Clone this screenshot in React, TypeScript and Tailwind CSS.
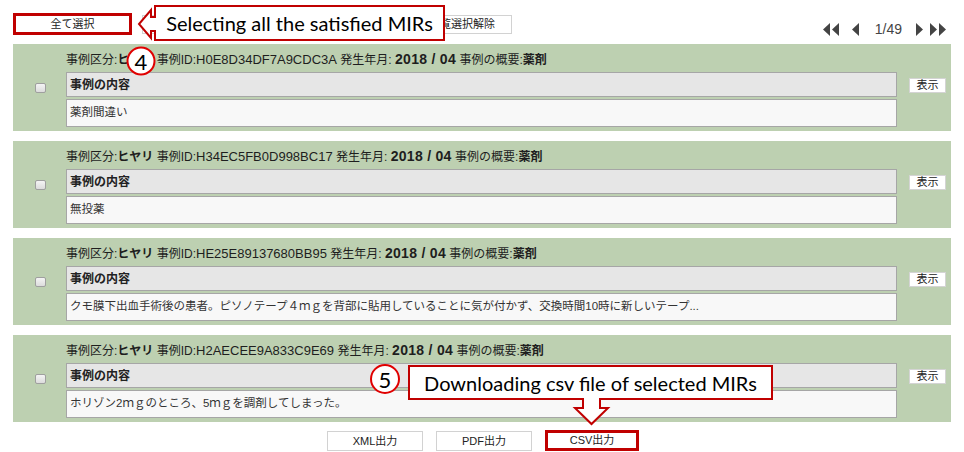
import React from 'react';

interface CaseItem {
  kind: string;
  id: string;
  date: string;
  summary: string;
  body: string;
}

const cases: CaseItem[] = [
  { kind: 'ヒヤリ', id: 'H0E8D34DF7A9CDC3A', date: '2018 / 04', summary: '薬剤', body: '薬剤間違い' },
  { kind: 'ヒヤリ', id: 'H34EC5FB0D998BC17', date: '2018 / 04', summary: '薬剤', body: '無投薬' },
  {
    kind: 'ヒヤリ',
    id: 'HE25E89137680BB95',
    date: '2018 / 04',
    summary: '薬剤',
    body: 'クモ膜下出血手術後の患者。ピソノテープ４ｍｇを背部に貼用していることに気が付かず、交換時間10時に新しいテープ...',
  },
  { kind: 'ヒヤリ', id: 'H2AECEE9A833C9E69', date: '2018 / 04', summary: '薬剤', body: 'ホリゾン2ｍｇのところ、5ｍｇを調剤してしまった。' },
];

function CaseCard({ item }: { item: CaseItem }) {
  return (
    <div className="flex h-[87px] bg-[#bdd0b1]">
      {/* checkbox column */}
      <div className="flex w-[53px] items-center pl-[22px]">
        <div className="h-[10px] w-[11px] rounded-[2px] border border-[#9f9f9f] bg-gradient-to-b from-[#f4f4f4] to-[#dcdcdc]" />
      </div>

      <div className="flex w-[831px] flex-col pt-[7px]">
        <div className="h-[16px] whitespace-nowrap text-[12px] leading-[16px] text-[#1e1e1e]">
          <span>事例区分:</span>
          <span className="font-bold">{item.kind}</span>
          <span> 事例ID:</span>
          <span className="text-[13px]">{item.id}</span>
          <span> 発生年月: </span>
          <span className="text-[14px] font-bold tracking-[0.3px]">{item.date}</span>
          <span> 事例の概要:</span>
          <span className="font-bold">{item.summary}</span>
        </div>
        <div className="mt-[5px] flex h-[25px] items-center border border-[#a6a6a6] bg-[#e6e6e6] pl-[3px] text-[12px] font-bold text-[#222]">
          事例の内容
        </div>
        <div className="mt-[2px] flex h-[28px] items-center border border-[#a6a6a6] bg-[#f8f8f8] pl-[3px] text-[11.5px] text-[#333]">
          {item.body}
        </div>
      </div>

      <div className="ml-[12px] pt-[34px]">
        <div className="flex h-[15px] w-[37px] items-center justify-center border border-[#d4d4d4] bg-white text-[11px] text-[#222]">
          表示
        </div>
      </div>
    </div>
  );
}

function Tri({ dir }: { dir: 'l' | 'r' }) {
  return dir === 'l' ? <path d="M7 0 L0 6.5 L7 13 Z" /> : <path d="M0 0 L7 6.5 L0 13 Z" />;
}

export default function App() {
  return (
    <div className="relative h-[452px] w-[964px] overflow-hidden bg-white font-['Liberation_Sans','Noto_Sans_CJK_JP',sans-serif]">
      {/* toolbar */}
      <div className="flex h-[31px] items-start pt-[13px] pl-[13px] pr-[17px]">
        <div className="flex h-[22px] w-[119px] items-center justify-center border-[3px] border-[#c00000] bg-white text-[11px] text-[#222]">
          全て選択
        </div>
        {/* button hidden behind the callout */}
        <div className="ml-[10px] mt-[2px] h-[19px] w-[116px] border border-[#d2d2d2] bg-white" />
        <div className="ml-[154px] mt-[2px] flex h-[19px] w-[100px] items-center justify-center border border-[#d2d2d2] bg-white text-[11px] text-[#222]">
          一覧選択解除
        </div>

        {/* pagination */}
        <div className="ml-auto mt-[10px] flex h-[13px] items-center text-[#444]">
          <svg width="17" height="13" viewBox="0 0 17 13" fill="currentColor">
            <Tri dir="l" />
            <g transform="translate(9 0)">
              <Tri dir="l" />
            </g>
          </svg>
          <svg className="ml-[12px]" width="7" height="13" viewBox="0 0 7 13" fill="currentColor">
            <Tri dir="l" />
          </svg>
          <span className="ml-[16px] text-[14px] leading-[13px] text-[#444]">1/49</span>
          <svg className="ml-[14px]" width="7" height="13" viewBox="0 0 7 13" fill="currentColor">
            <Tri dir="r" />
          </svg>
          <svg className="ml-[7px]" width="17" height="13" viewBox="0 0 17 13" fill="currentColor">
            <Tri dir="r" />
            <g transform="translate(9 0)">
              <Tri dir="r" />
            </g>
          </svg>
        </div>
      </div>

      {/* case list */}
      <div className="mt-[13px] flex w-[951px] flex-col gap-[10px] pl-[13px]">
        {cases.map((c) => (
          <CaseCard key={c.id} item={c} />
        ))}
      </div>

      {/* export buttons */}
      <div className="mt-[9px] flex justify-center gap-[13px] pl-[2px]">
        <div className="flex h-[20px] w-[96px] items-center justify-center border border-[#d2d2d2] bg-white text-[11px] text-[#222]">
          XML出力
        </div>
        <div className="flex h-[20px] w-[96px] items-center justify-center border border-[#d2d2d2] bg-white text-[11px] text-[#222]">
          PDF出力
        </div>
        <div className="-mt-[1px] flex h-[21px] w-[94px] items-center justify-center border-[3px] border-[#c00000] bg-white text-[11px] text-[#222]">
          CSV出力
        </div>
      </div>

      {/* annotation callouts */}
      <svg className="absolute left-0 top-0" width="964" height="452" viewBox="0 0 964 452">
        <path
          d="M155 6 H444 V40 H155 V31 H151 V38 L139 24 L151 10 V17 H155 Z"
          fill="white"
          stroke="#c00000"
          strokeWidth="2"
        />
        <circle cx="141" cy="61" r="13.5" fill="white" stroke="#e00000" strokeWidth="2" />
        <path
          d="M409 366 H772 V399 H600 V408 H608 L591.5 424 L575 408 H583 V399 H409 Z"
          fill="white"
          stroke="#c00000"
          strokeWidth="2"
        />
        <circle cx="385" cy="379" r="14" fill="white" stroke="#e00000" strokeWidth="2" />
      </svg>
      <div className="absolute left-[156px] top-[7px] flex h-[32px] w-[287px] items-center justify-center font-['Lato',sans-serif] text-[20px] text-black">
        Selecting all the satisfied MIRs
      </div>
      <div className="absolute left-[127px] top-[47px] flex h-[28px] w-[28px] items-center justify-center font-['Lato',sans-serif] text-[22px] text-black">
        4
      </div>
      <div className="absolute left-[410px] top-[367px] flex h-[31px] w-[361px] items-center justify-center font-['Lato',sans-serif] text-[20px] text-black">
        Downloading csv file of selected MIRs
      </div>
      <div className="absolute left-[371px] top-[365px] flex h-[28px] w-[28px] items-center justify-center font-['Lato',sans-serif] text-[22px] text-black">
        5
      </div>
    </div>
  );
}
